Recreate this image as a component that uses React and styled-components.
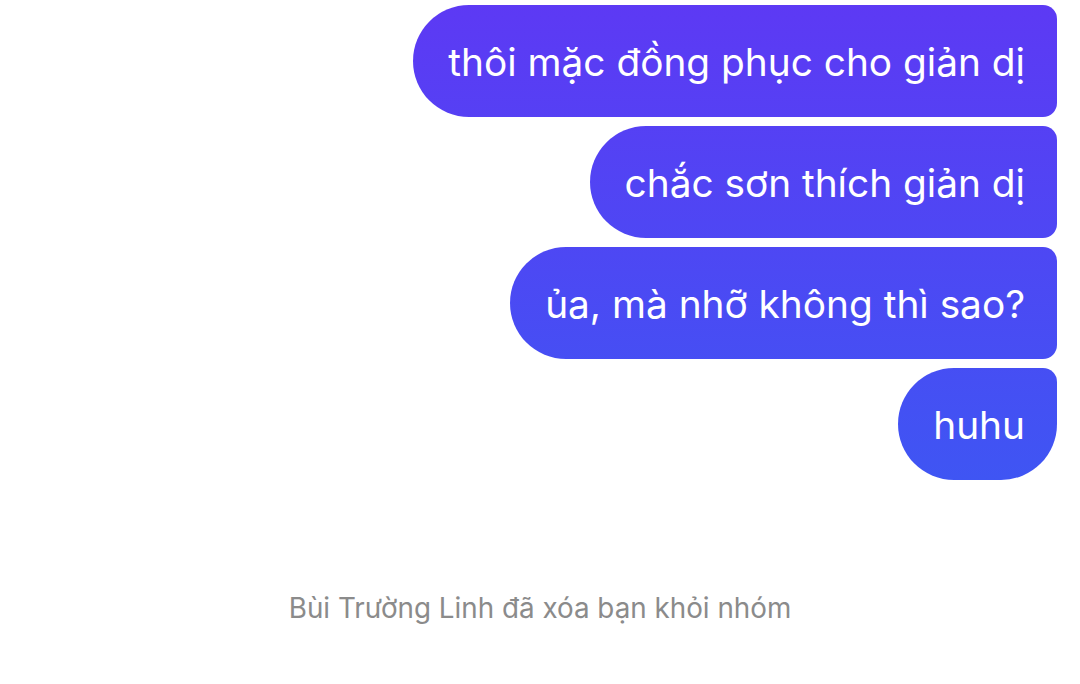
import React from "react";
import styled, { createGlobalStyle } from "styled-components";

const Global = createGlobalStyle`
  html, body { margin: 0; padding: 0; background: #ffffff; }
  body { font-family: Inter, "Noto Sans", sans-serif; }
`;

const Page = styled.div`
  width: 1080px;
  height: 684px;
  display: flex;
  flex-direction: column;
  background: #ffffff;
  overflow: hidden;
`;

const Thread = styled.div`
  display: flex;
  flex-direction: column;
  align-items: flex-end;
  gap: 9px;
  padding: 5px 23px 0 0;
`;

const Bubble = styled.div`
  height: 112px;
  box-sizing: border-box;
  display: flex;
  align-items: center;
  padding: 0 32px 0 35px;
  color: #ffffff;
  font-family: Inter, "Noto Sans", sans-serif;
  font-size: 38.8px;
  white-space: nowrap;
  background: linear-gradient(180deg, rgb(93, 57, 244) 0px, rgb(50, 97, 243) 684px);
  background-attachment: fixed;
  border-radius: 56px 14px ${(p) => (p.$last ? 56 : 14)}px 56px;
`;

const Notice = styled.div`
  margin-top: 111px;
  text-align: center;
  color: #8b8b8b;
  font-family: Inter, "Noto Sans", sans-serif;
  font-size: 27.8px;
`;

const messages = [
  "thôi mặc đồng phục cho giản dị",
  "chắc sơn thích giản dị",
  "ủa, mà nhỡ không thì sao?",
  "huhu",
];

export default function App() {
  return (
    <Page>
      <Global />
      <Thread>
        {messages.map((m, i) => (
          <Bubble key={i} $last={i === messages.length - 1}>
            {m}
          </Bubble>
        ))}
      </Thread>
      <Notice>Bùi Trường Linh đã xóa bạn khỏi nhóm</Notice>
    </Page>
  );
}
